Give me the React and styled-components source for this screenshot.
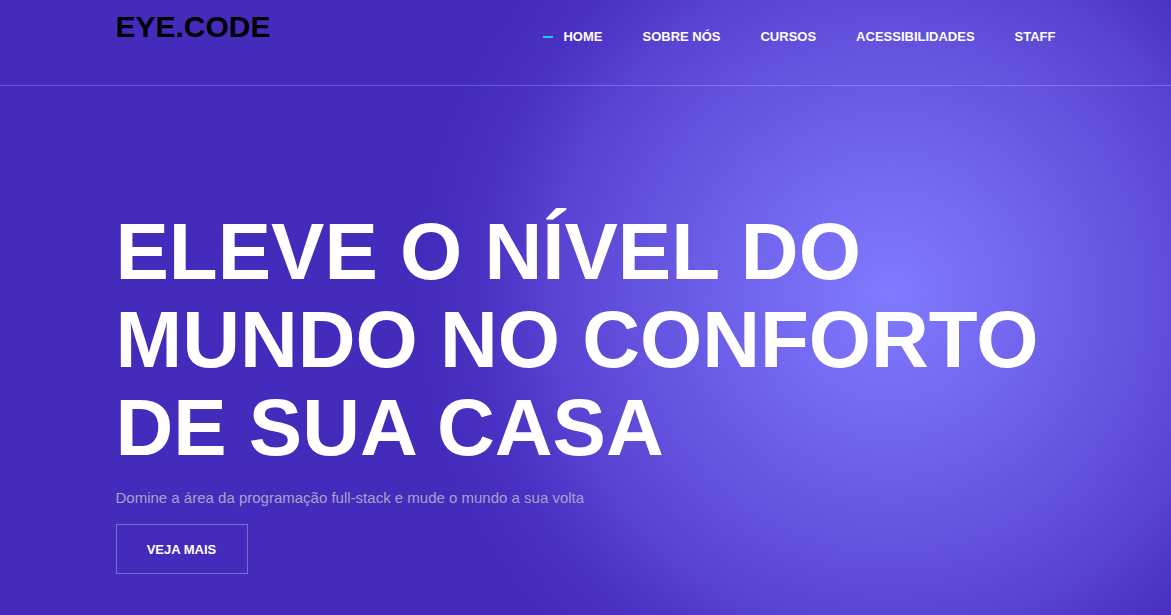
import React from "react";
import styled, { createGlobalStyle } from "styled-components";

const GlobalStyle = createGlobalStyle`
  * {
    box-sizing: border-box;
  }
  html,
  body {
    margin: 0;
    padding: 0;
  }
  body {
    font-family: "Liberation Sans", Arial, sans-serif;
    background-color: #442bbb;
  }
`;

const Page = styled.div`
  min-height: 100vh;
  background: radial-gradient(
    circle at 890px 295px,
    #7f7bff 0px,
    #7468f0 120px,
    #6353de 250px,
    #5944d3 330px,
    #4a31c3 410px,
    #442bbb 470px
  );
  overflow: hidden;
`;

const Header = styled.header`
  height: 86px;
  border-bottom: 1px solid rgba(255, 255, 255, 0.22);
`;

const Container = styled.div`
  width: 940px;
  margin: 0 auto;
`;

const HeaderInner = styled(Container)`
  display: flex;
  justify-content: space-between;
  align-items: flex-start;
`;

const Logo = styled.h1`
  margin: 9px 0 0;
  font-size: 30px;
  line-height: 36px;
  font-weight: 700;
  color: #000;
`;

const Nav = styled.nav`
  display: flex;
  margin-top: 27px;
`;

const NavLink = styled.a`
  position: relative;
  padding: 0 20px;
  font-size: 13px;
  line-height: 20px;
  font-weight: 700;
  color: #fff;
  text-transform: uppercase;
  text-decoration: none;
  cursor: pointer;

  &:last-child {
    padding-right: 0;
  }

  &::before {
    content: "";
    display: ${({ $active }) => ($active ? "block" : "none")};
    position: absolute;
    left: 0;
    top: 9px;
    width: 10px;
    height: 2px;
    background: #22c7e2;
  }
`;

const Hero = styled(Container)`
  padding-top: 122px;
`;

const Title = styled.h2`
  margin: 0;
  font-size: 80px;
  line-height: 88px;
  font-weight: 700;
  color: #fff;
  text-transform: uppercase;
`;

const Subtitle = styled.p`
  margin: 14px 0 0;
  font-size: 15px;
  line-height: 24px;
  color: #a8a3cc;
`;

const Button = styled.a`
  display: inline-flex;
  align-items: center;
  justify-content: center;
  margin-top: 14px;
  width: 132px;
  height: 50px;
  border: 1px solid rgba(255, 255, 255, 0.3);
  font-size: 13px;
  font-weight: 700;
  color: #fff;
  text-transform: uppercase;
  text-decoration: none;
  cursor: pointer;
`;

const links = ["Home", "Sobre nós", "Cursos", "Acessibilidades", "Staff"];

const App = () => {
  return (
    <Page>
      <GlobalStyle />
      <Header>
        <HeaderInner>
          <Logo>EYE.CODE</Logo>
          <Nav>
            {links.map((link, i) => (
              <NavLink key={link} $active={i === 0}>
                {link}
              </NavLink>
            ))}
          </Nav>
        </HeaderInner>
      </Header>
      <Hero>
        <Title>
          Eleve o nível do
          <br />
          mundo no conforto
          <br />
          de sua casa
        </Title>
        <Subtitle>
          Domine a área da programação full-stack e mude o mundo a sua volta
        </Subtitle>
        <Button>Veja mais</Button>
      </Hero>
    </Page>
  );
};

export default App;
